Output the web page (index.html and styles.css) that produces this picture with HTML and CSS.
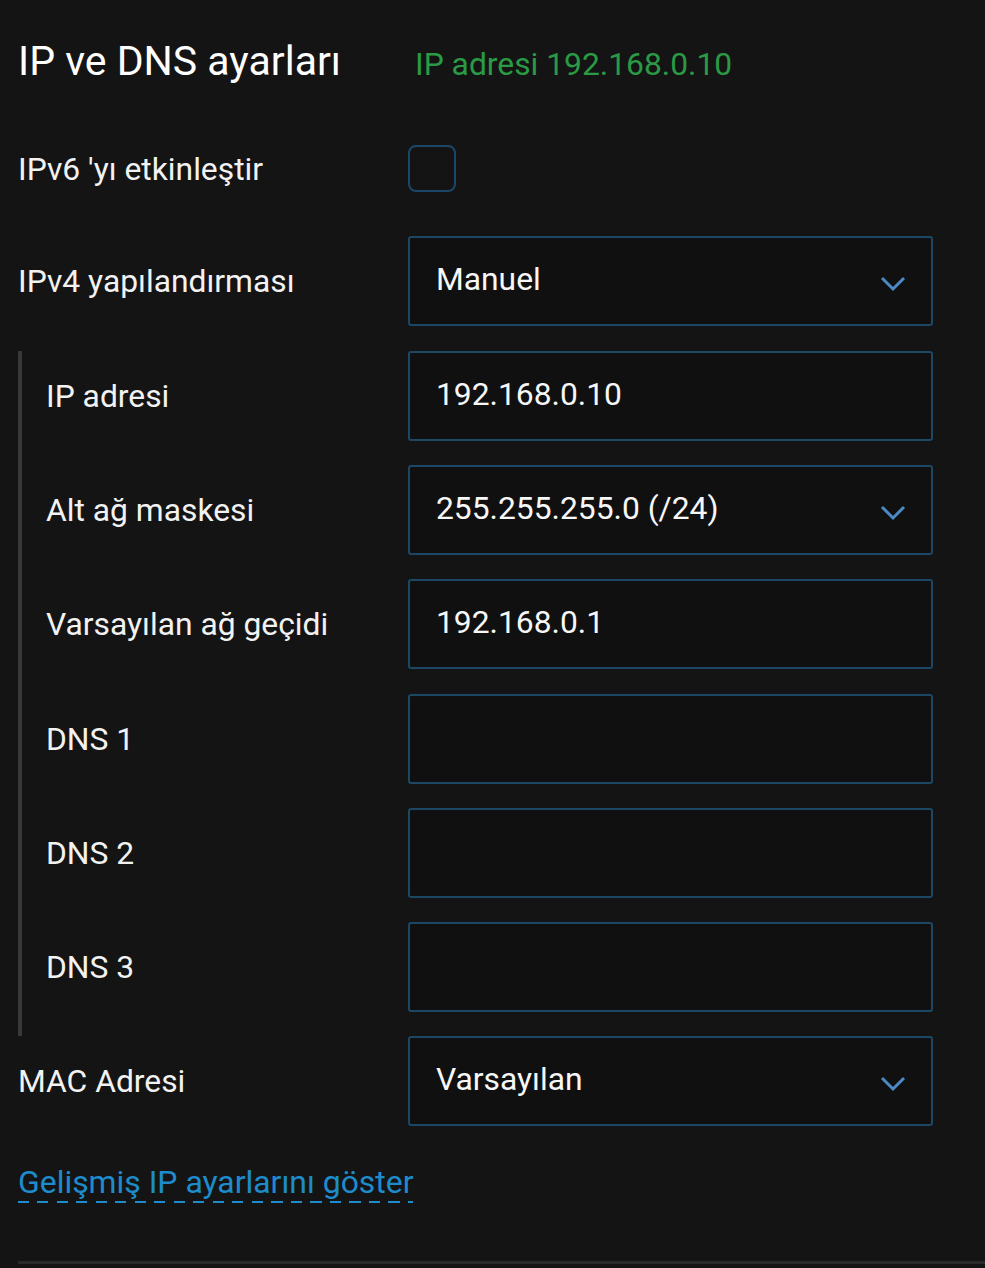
FILE: index.html
```html
<!DOCTYPE html>
<html lang="tr">
<head>
<meta charset="utf-8">
<link rel="stylesheet" href="styles.css">
</head>
<body>
<div class="page">
  <header class="header">
    <h1 class="title">IP ve DNS ayarları</h1>
    <span class="status">IP adresi 192.168.0.10</span>
  </header>

  <div class="row row-check">
    <span class="label">IPv6 'yı etkinleştir</span>
    <span class="checkbox"></span>
  </div>

  <div class="row row-first">
    <span class="label">IPv4 yapılandırması</span>
    <div class="field select"><span>Manuel</span><svg class="chev" viewBox="0 0 26 16"><path d="M2 2 L13 13 L24 2"/></svg></div>
  </div>

  <div class="group">
    <div class="row">
      <span class="label">IP adresi</span>
      <div class="field"><span>192.168.0.10</span></div>
    </div>
    <div class="row">
      <span class="label">Alt ağ maskesi</span>
      <div class="field select"><span>255.255.255.0 (/24)</span><svg class="chev" viewBox="0 0 26 16"><path d="M2 2 L13 13 L24 2"/></svg></div>
    </div>
    <div class="row">
      <span class="label">Varsayılan ağ geçidi</span>
      <div class="field"><span>192.168.0.1</span></div>
    </div>
    <div class="row">
      <span class="label">DNS 1</span>
      <div class="field"></div>
    </div>
    <div class="row">
      <span class="label">DNS 2</span>
      <div class="field"></div>
    </div>
    <div class="row">
      <span class="label">DNS 3</span>
      <div class="field"></div>
    </div>
  </div>

  <div class="row">
    <span class="label">MAC Adresi</span>
    <div class="field select"><span>Varsayılan</span><svg class="chev" viewBox="0 0 26 16"><path d="M2 2 L13 13 L24 2"/></svg></div>
  </div>

  <a class="link" href="#">Gelişmiş IP ayarlarını göster</a>

  <div class="divider"></div>
</div>
</body>
</html>
```
FILE: styles.css
```css
* { box-sizing: border-box; }
html, body {
  margin: 0;
  background: #141414;
  height: 100%;
}
body {
  font-family: Roboto, "Liberation Sans", sans-serif;
  color: #f2f2f2;
  overflow: hidden;
}
.page {
  padding-left: 18px;
  display: flex;
  flex-direction: column;
}
.header {
  display: flex;
  align-items: baseline;
  margin-top: 37px;
  height: 48px;
}
.title {
  margin: 0;
  font-size: 41px;
  line-height: 48px;
  font-weight: 400;
  width: 397px;
  color: #ffffff;
}
.status {
  font-size: 31.8px;
  color: #2a9a45;
}
.row {
  display: flex;
  align-items: center;
}
.label {
  width: 390px;
  font-size: 31.8px;
  line-height: 36px;
  flex: none;
}
.group .label { width: 362px; }
.row-check {
  margin-top: 60px;
}
.checkbox {
  width: 48px;
  height: 47px;
  border: 2px solid #1b4866;
  border-radius: 8px;
}
.row-first {
  margin-top: 44px;
}
.group {
  margin-top: 25px;
  border-left: 4px solid #393939;
  padding-left: 24px;
  padding-bottom: 24px;
  display: flex;
  flex-direction: column;
  gap: 24.2px;
}
.field {
  width: 525px;
  height: 90px;
  border: 2px solid #1c4765;
  border-radius: 3px;
  background: #101010;
  display: flex;
  align-items: center;
  justify-content: space-between;
  padding: 0 26px 0 26px;
  font-size: 31.8px;
  color: #f7f7f7;
}
.field span { margin-top: -4px; }
.chev {
  width: 26px;
  height: 16px;
  margin-top: 6px;
  margin-right: -1px;
}
.chev path {
  fill: none;
  stroke: #4b8ac2;
  stroke-width: 3;
}
.link {
  align-self: flex-start;
  margin-top: 38px;
  font-size: 31.9px;
  line-height: 36px;
  color: #1e8ccc;
  text-decoration: none;
  padding-bottom: 3px;
  background-image: repeating-linear-gradient(90deg, #1e8ccc 0 11px, transparent 11px 19.5px);
  background-size: 100% 2px;
  background-position: 0 100%;
  background-repeat: no-repeat;
}
.divider {
  margin-top: 58px;
  height: 3px;
  background: #2a2a2a;
}
```
